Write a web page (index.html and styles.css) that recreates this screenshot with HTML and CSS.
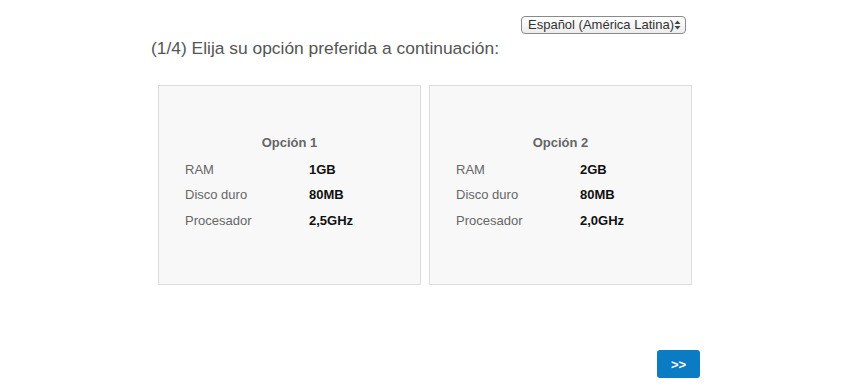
FILE: index.html
```html
<!DOCTYPE html>
<html lang="es">
<head>
<meta charset="utf-8">
<title>Encuesta</title>
<link rel="stylesheet" href="styles.css">
</head>
<body>
<div class="page">
  <div class="lang-row">
    <div class="lang-select">
      <span class="lang-text">Español (América Latina)</span>
      <svg class="lang-arrows" width="7" height="10" viewBox="0 0 7 10"><path d="M3.5 0.5 L6.5 4 L0.5 4 Z M3.5 9.5 L6.5 6 L0.5 6 Z" fill="#444"/></svg>
    </div>
  </div>
  <h1 class="title">(1/4) Elija su opción preferida a continuación:</h1>
  <div class="cards">
    <div class="card">
      <div class="card-inner">
        <div class="card-title">Opción 1</div>
        <div class="row"><span class="label">RAM</span><span class="value">1GB</span></div>
        <div class="row"><span class="label">Disco duro</span><span class="value">80MB</span></div>
        <div class="row"><span class="label">Procesador</span><span class="value">2,5GHz</span></div>
      </div>
    </div>
    <div class="card">
      <div class="card-inner">
        <div class="card-title">Opción 2</div>
        <div class="row"><span class="label">RAM</span><span class="value">2GB</span></div>
        <div class="row"><span class="label">Disco duro</span><span class="value">80MB</span></div>
        <div class="row"><span class="label">Procesador</span><span class="value">2,0GHz</span></div>
      </div>
    </div>
  </div>
  <div class="footer">
    <button class="next">&gt;&gt;</button>
  </div>
</div>
</body>
</html>
```

FILE: styles.css
```css
html, body {
  margin: 0;
  padding: 0;
  background: #ffffff;
  font-family: "Liberation Sans", Arial, Helvetica, sans-serif;
}
.page {
  width: 550px;
  margin: 0 auto;
  padding-top: 16px;
  box-sizing: border-box;
}
.lang-row {
  display: flex;
  justify-content: flex-end;
  padding-right: 14px;
}
.lang-select {
  display: flex;
  align-items: center;
  justify-content: space-between;
  width: 165px;
  height: 18px;
  box-sizing: border-box;
  border: 1px solid #8a8a8a;
  border-radius: 4px;
  background: linear-gradient(#ffffff, #ececec);
  padding: 0 4px 0 6px;
  font-size: 13px;
  color: #333;
}
.lang-text {
  line-height: 16px;
  white-space: nowrap;
}
.title {
  margin: 3px 0 0 1px;
  font-size: 17.4px;
  font-weight: normal;
  line-height: 22px;
  color: #555555;
}
.cards {
  display: flex;
  justify-content: center;
  gap: 8px;
  margin-top: 26px;
}
.card {
  width: 263px;
  height: 200px;
  box-sizing: border-box;
  background: #f8f8f8;
  border: 1px solid #dddddd;
  display: flex;
  align-items: center;
}
.card-inner {
  width: 100%;
  padding: 0 26px 3px;
  box-sizing: border-box;
}
.card-title {
  text-align: center;
  font-weight: bold;
  font-size: 13px;
  color: #666666;
  line-height: 18px;
  margin-bottom: 4px;
}
.row {
  display: flex;
  height: 25.5px;
  align-items: center;
  font-size: 13px;
}
.label {
  width: 124px;
  color: #666666;
}
.value {
  font-weight: bold;
  color: #111111;
}
.footer {
  display: flex;
  justify-content: flex-end;
  margin-top: 65px;
}
.next {
  width: 43px;
  height: 28px;
  border: none;
  border-radius: 3px;
  background: #0b7bc3;
  color: #ffffff;
  font-family: "Liberation Sans", Arial, sans-serif;
  font-weight: bold;
  font-size: 13px;
  padding: 0;
}
```
